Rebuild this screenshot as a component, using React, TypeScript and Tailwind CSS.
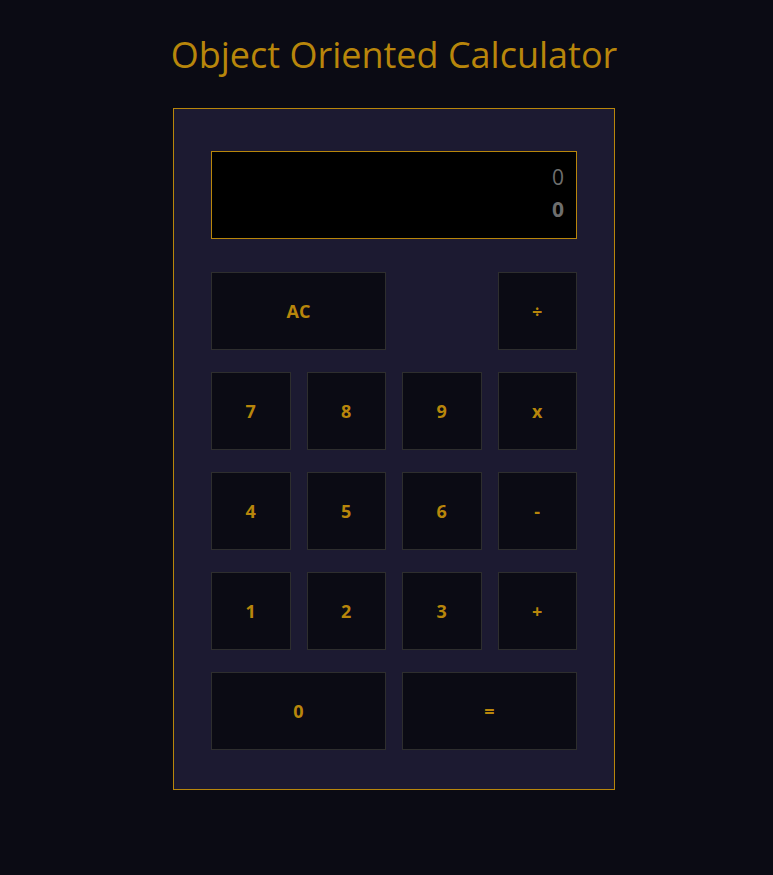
import React from "react";

const btn =
  "h-[78px] bg-[#0b0b14] border border-[#2e2e2e] text-[#b8860b] font-bold text-[18px] flex items-center justify-center";

export default function App() {
  const keys: { label: string; span?: boolean; empty?: boolean }[] = [
    { label: "AC", span: true },
    { label: "", empty: true },
    { label: "÷" },
    { label: "7" },
    { label: "8" },
    { label: "9" },
    { label: "x" },
    { label: "4" },
    { label: "5" },
    { label: "6" },
    { label: "-" },
    { label: "1" },
    { label: "2" },
    { label: "3" },
    { label: "+" },
    { label: "0", span: true },
    { label: "=", span: true },
  ];
  return (
    <div
      className="min-h-[875px] bg-[#0b0b14] flex flex-col items-center pl-[15px] pt-[33px]"
      style={{ fontFamily: '"Open Sans", "Noto Sans", sans-serif' }}
    >
      <h1 className="text-[36px] leading-[43px] text-[#b8860b] font-normal">
        Object Oriented Calculator
      </h1>
      <div className="mt-[32px] w-[442px] bg-[#1c1a31] border border-[#b8860b] pt-[42px] pb-[39px] px-[37px]">
        <div className="h-[88px] bg-black border border-[#b8860b] flex flex-col items-end justify-center pr-[12px] pb-[5px] text-[#6e6e6e] text-[21px] leading-[32px]">
          <div>0</div>
          <div className="font-bold">0</div>
        </div>
        <div className="mt-[33px] grid grid-cols-4 gap-x-[16px] gap-y-[22px]">
          {keys.map((k, i) =>
            k.empty ? (
              <div key={i} />
            ) : (
              <div key={i} className={`${btn} ${k.span ? "col-span-2" : ""}`}>
                {k.label}
              </div>
            )
          )}
        </div>
      </div>
    </div>
  );
}
